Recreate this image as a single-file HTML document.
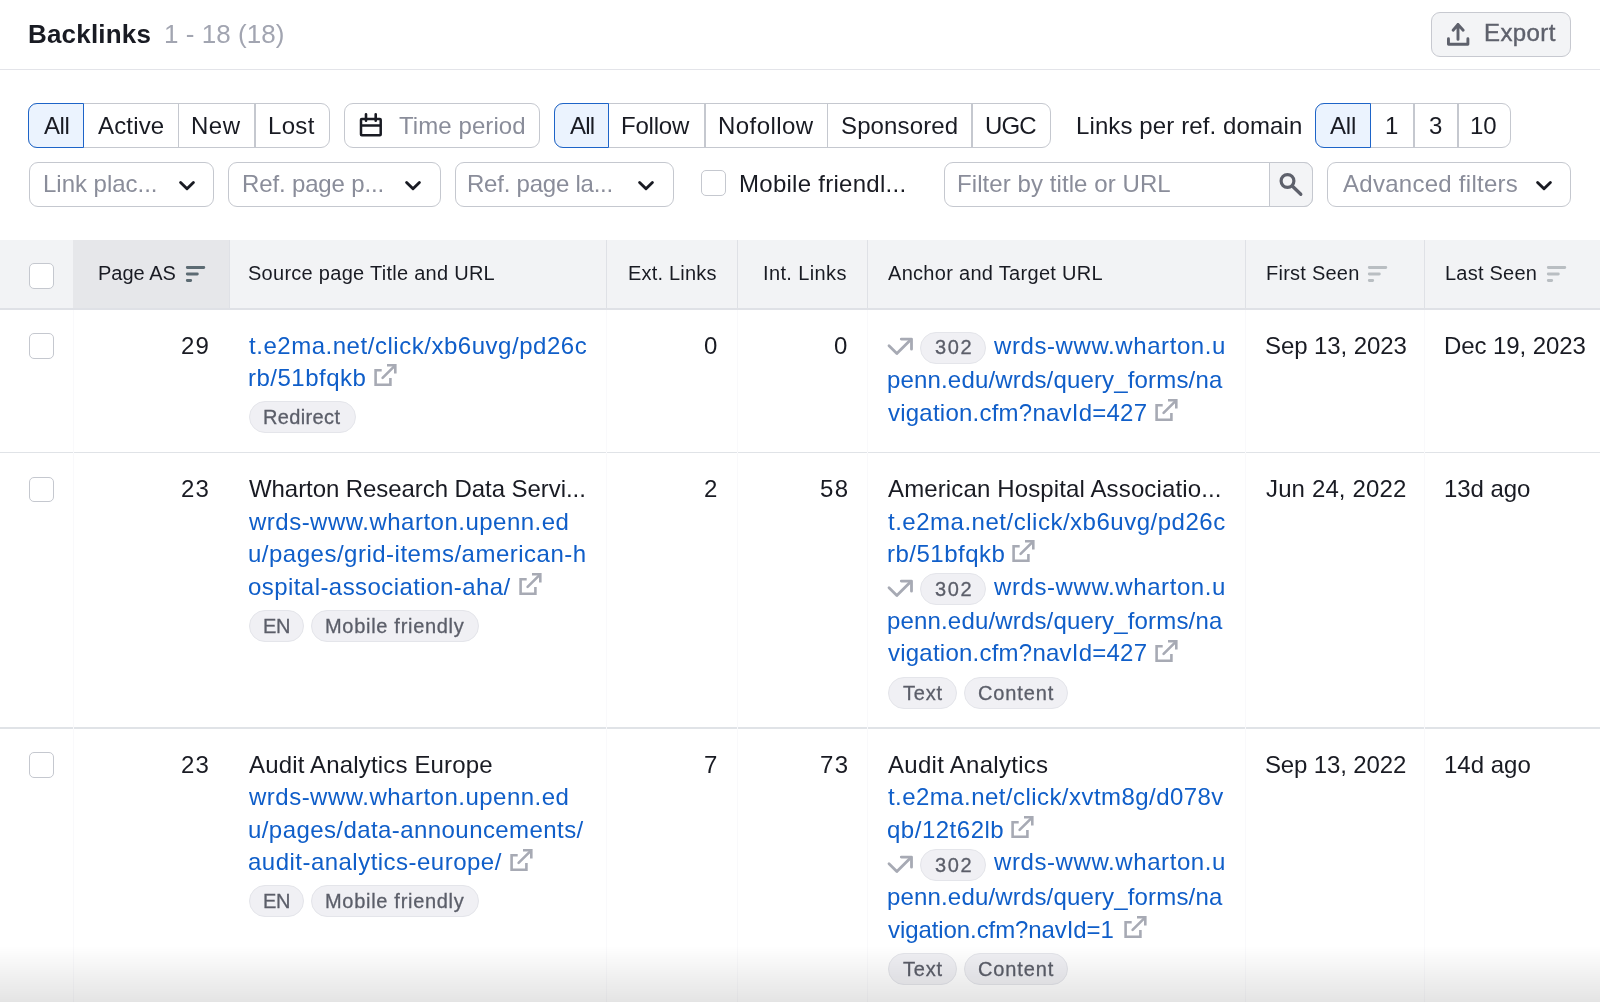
<!DOCTYPE html>
<html><head><meta charset="utf-8"><title>Backlinks</title>
<style>
html,body{margin:0;padding:0;}
body{width:1600px;height:1002px;overflow:hidden;position:relative;background:#fff;font-family:"Liberation Sans",sans-serif;color:#191b23;}
.t{position:absolute;white-space:nowrap;will-change:transform;}
.r{position:absolute;}
</style></head><body>
<div class="t" style="left:28.40px;top:18.00px;font-size:26px;line-height:32px;color:#191b23;font-weight:700;letter-spacing:0.188px;">Backlinks</div>
<div class="t" style="left:163.50px;top:18.00px;font-size:26px;line-height:32px;color:#a2a5b1;letter-spacing:0.050px;">1 - 18 (18)</div>
<div class="r" style="left:1431.00px;top:12.00px;width:140.00px;height:45.00px;border:1.5px solid #c7c9d0;border-radius:9px;background:#f3f4f6;box-sizing:border-box;"></div>
<svg class="r" style="left:1440px;top:16px" width="36" height="36" viewBox="0 0 36 36"><path d="M18 23.4 V8.5 M13.1 14.2 L18 8.5 L23.2 14.2" stroke="#5e616c" stroke-width="2.9" fill="none" stroke-linecap="round" stroke-linejoin="round"/><path d="M8.45 22.8 V28.2 H27.9 V22.8" stroke="#5e616c" stroke-width="2.9" fill="none" stroke-linecap="round" stroke-linejoin="round"/></svg>
<div class="t" style="left:1484.00px;top:18.00px;font-size:24px;line-height:30px;color:#5e616c;letter-spacing:0.400px;-webkit-text-stroke:0.4px #5e616c;">Export</div>
<div class="r" style="left:0.00px;top:68.50px;width:1600.00px;height:1.50px;background:#e3e4e9;"></div>
<div class="r" style="left:28.00px;top:103.00px;width:301.50px;height:45.00px;border:1.5px solid #c5c8cf;border-radius:9px;box-sizing:border-box;background:#fff;"></div>
<div class="r" style="left:28.00px;top:103.00px;width:56.00px;height:45.00px;border:1.75px solid #1d64c8;border-radius:9px 0 0 9px;box-sizing:border-box;background:#ebf3fe;"></div>
<div class="r" style="left:177.65px;top:103.00px;width:1.50px;height:45.00px;background:#c5c8cf;"></div>
<div class="r" style="left:254.25px;top:103.00px;width:1.50px;height:45.00px;background:#c5c8cf;"></div>
<div class="t" style="left:43.70px;top:111.00px;font-size:24px;line-height:30px;color:#191b23;letter-spacing:-0.400px;">All</div>
<div class="t" style="left:97.90px;top:111.00px;font-size:24px;line-height:30px;color:#191b23;letter-spacing:0.160px;">Active</div>
<div class="t" style="left:191.00px;top:111.00px;font-size:24px;line-height:30px;color:#191b23;letter-spacing:0.500px;">New</div>
<div class="t" style="left:268.00px;top:111.00px;font-size:24px;line-height:30px;color:#191b23;letter-spacing:0.333px;">Lost</div>
<div class="r" style="left:344.00px;top:103.00px;width:195.50px;height:45.00px;border:1.5px solid #c5c8cf;border-radius:9px;box-sizing:border-box;"></div>
<svg class="r" style="left:352px;top:106px" width="38" height="38" viewBox="0 0 38 38"><rect x="9" y="13" width="19.7" height="16.3" rx="0.8" fill="none" stroke="#191b23" stroke-width="2.5"/><path d="M9 19.5 H28.7" stroke="#191b23" stroke-width="2.5"/><path d="M14 8.2 V14.8 M23.7 8.2 V14.8" stroke="#191b23" stroke-width="2.6" stroke-linecap="round"/></svg>
<div class="t" style="left:398.75px;top:111.00px;font-size:24px;line-height:30px;color:#8a8d9a;letter-spacing:0.075px;">Time period</div>
<div class="r" style="left:554.00px;top:103.00px;width:496.50px;height:45.00px;border:1.5px solid #c5c8cf;border-radius:9px;box-sizing:border-box;background:#fff;"></div>
<div class="r" style="left:554.00px;top:103.00px;width:54.50px;height:45.00px;border:1.75px solid #1d64c8;border-radius:9px 0 0 9px;box-sizing:border-box;background:#ebf3fe;"></div>
<div class="r" style="left:704.25px;top:103.00px;width:1.50px;height:45.00px;background:#c5c8cf;"></div>
<div class="r" style="left:826.75px;top:103.00px;width:1.50px;height:45.00px;background:#c5c8cf;"></div>
<div class="r" style="left:971.25px;top:103.00px;width:1.50px;height:45.00px;background:#c5c8cf;"></div>
<div class="t" style="left:569.50px;top:111.00px;font-size:24px;line-height:30px;color:#191b23;letter-spacing:-0.750px;">All</div>
<div class="t" style="left:621.00px;top:111.00px;font-size:24px;line-height:30px;color:#191b23;letter-spacing:-0.200px;">Follow</div>
<div class="t" style="left:717.50px;top:111.00px;font-size:24px;line-height:30px;color:#191b23;letter-spacing:0.429px;">Nofollow</div>
<div class="t" style="left:840.75px;top:111.00px;font-size:24px;line-height:30px;color:#191b23;letter-spacing:0.125px;">Sponsored</div>
<div class="t" style="left:984.75px;top:111.00px;font-size:24px;line-height:30px;color:#191b23;letter-spacing:-0.875px;">UGC</div>
<div class="t" style="left:1075.80px;top:111.00px;font-size:24px;line-height:30px;color:#191b23;letter-spacing:0.110px;">Links per ref. domain</div>
<div class="r" style="left:1315.00px;top:103.00px;width:195.50px;height:45.00px;border:1.5px solid #c5c8cf;border-radius:9px;box-sizing:border-box;background:#fff;"></div>
<div class="r" style="left:1315.00px;top:103.00px;width:56.00px;height:45.00px;border:1.75px solid #1d64c8;border-radius:9px 0 0 9px;box-sizing:border-box;background:#ebf3fe;"></div>
<div class="r" style="left:1413.25px;top:103.00px;width:1.50px;height:45.00px;background:#c5c8cf;"></div>
<div class="r" style="left:1457.25px;top:103.00px;width:1.50px;height:45.00px;background:#c5c8cf;"></div>
<div class="t" style="left:1330.00px;top:111.00px;font-size:24px;line-height:30px;color:#191b23;letter-spacing:-0.150px;">All</div>
<div class="t" style="left:1385.00px;top:111.00px;font-size:24px;line-height:30px;color:#191b23;">1</div>
<div class="t" style="left:1428.50px;top:111.00px;font-size:24px;line-height:30px;color:#191b23;">3</div>
<div class="t" style="left:1469.70px;top:111.00px;font-size:24px;line-height:30px;color:#191b23;letter-spacing:-0.100px;">10</div>
<div class="r" style="left:28.50px;top:162.00px;width:185.50px;height:44.50px;border:1.5px solid #c5c8cf;border-radius:9px;box-sizing:border-box;"></div>
<div class="t" style="left:42.60px;top:169.00px;font-size:24px;line-height:30px;color:#8a8d9a;letter-spacing:-0.018px;">Link plac...</div>
<svg class="r" style="left:170.5px;top:172px" width="32" height="26" viewBox="0 0 32 26"><path d="M9.6 10.5 L16 16.8 L22.4 10.5" stroke="#191b23" stroke-width="2.9" fill="none" stroke-linecap="round" stroke-linejoin="round"/></svg>
<div class="r" style="left:228.00px;top:162.00px;width:213.00px;height:44.50px;border:1.5px solid #c5c8cf;border-radius:9px;box-sizing:border-box;"></div>
<div class="t" style="left:241.60px;top:169.00px;font-size:24px;line-height:30px;color:#8a8d9a;letter-spacing:-0.146px;">Ref. page p...</div>
<svg class="r" style="left:397.3px;top:172px" width="32" height="26" viewBox="0 0 32 26"><path d="M9.6 10.5 L16 16.8 L22.4 10.5" stroke="#191b23" stroke-width="2.9" fill="none" stroke-linecap="round" stroke-linejoin="round"/></svg>
<div class="r" style="left:454.50px;top:162.00px;width:219.00px;height:44.50px;border:1.5px solid #c5c8cf;border-radius:9px;box-sizing:border-box;"></div>
<div class="t" style="left:467.20px;top:169.00px;font-size:24px;line-height:30px;color:#8a8d9a;letter-spacing:-0.229px;">Ref. page la...</div>
<svg class="r" style="left:630.3px;top:172px" width="32" height="26" viewBox="0 0 32 26"><path d="M9.6 10.5 L16 16.8 L22.4 10.5" stroke="#191b23" stroke-width="2.9" fill="none" stroke-linecap="round" stroke-linejoin="round"/></svg>
<div class="r" style="left:700.50px;top:170.00px;width:25.50px;height:25.50px;border:1.5px solid #c5c8cf;border-radius:5px;box-sizing:border-box;background:#fff;"></div>
<div class="t" style="left:738.60px;top:169.00px;font-size:24px;line-height:30px;color:#191b23;letter-spacing:0.275px;">Mobile friendl...</div>
<div class="r" style="left:944.00px;top:162.00px;width:369.00px;height:44.50px;border:1.5px solid #c5c8cf;border-radius:9px;box-sizing:border-box;"></div>
<div class="r" style="left:1268.50px;top:162.00px;width:44.50px;height:44.50px;border:1.5px solid #c5c8cf;border-radius:0 9px 9px 0;box-sizing:border-box;background:#f3f4f6;"></div>
<svg class="r" style="left:1272px;top:166px" width="38" height="38" viewBox="0 0 38 38"><circle cx="15.5" cy="15" r="6.4" fill="none" stroke="#5e616c" stroke-width="3.2"/><path d="M20.5 20.3 L28.8 28.3" stroke="#5e616c" stroke-width="3.3" stroke-linecap="round"/></svg>
<div class="t" style="left:956.90px;top:169.00px;font-size:24px;line-height:30px;color:#8a8d9a;letter-spacing:0.076px;">Filter by title or URL</div>
<div class="r" style="left:1327.00px;top:162.00px;width:244.00px;height:44.50px;border:1.5px solid #c5c8cf;border-radius:9px;box-sizing:border-box;"></div>
<div class="t" style="left:1342.50px;top:169.00px;font-size:24px;line-height:30px;color:#8a8d9a;letter-spacing:0.273px;">Advanced filters</div>
<svg class="r" style="left:1527.6px;top:172px" width="32" height="26" viewBox="0 0 32 26"><path d="M9.6 10.5 L16 16.8 L22.4 10.5" stroke="#191b23" stroke-width="2.9" fill="none" stroke-linecap="round" stroke-linejoin="round"/></svg>
<div class="r" style="left:0.00px;top:240.00px;width:1600.00px;height:69.00px;background:#f2f3f5;"></div>
<div class="r" style="left:73.00px;top:240.00px;width:156.00px;height:69.00px;background:#e6e7ea;"></div>
<div class="r" style="left:0.00px;top:308.20px;width:1600.00px;height:1.80px;background:#dfe1e6;"></div>
<div class="r" style="left:228.80px;top:240.00px;width:1.00px;height:68.00px;background:#dfe1e6;"></div>
<div class="r" style="left:606.00px;top:240.00px;width:1.00px;height:68.00px;background:#dfe1e6;"></div>
<div class="r" style="left:736.80px;top:240.00px;width:1.00px;height:68.00px;background:#dfe1e6;"></div>
<div class="r" style="left:867.00px;top:240.00px;width:1.00px;height:68.00px;background:#dfe1e6;"></div>
<div class="r" style="left:1245.00px;top:240.00px;width:1.00px;height:68.00px;background:#dfe1e6;"></div>
<div class="r" style="left:1423.80px;top:240.00px;width:1.00px;height:68.00px;background:#dfe1e6;"></div>
<div class="r" style="left:28.50px;top:263.00px;width:25.50px;height:25.50px;border:1.5px solid #c5c8cf;border-radius:5px;box-sizing:border-box;background:#fff;"></div>
<div class="t" style="left:98.00px;top:261.00px;font-size:20px;line-height:25px;color:#191b23;">Page AS</div>
<div class="t" style="left:248.00px;top:261.00px;font-size:20px;line-height:25px;color:#191b23;letter-spacing:0.275px;">Source page Title and URL</div>
<div class="t" style="left:628.30px;top:261.00px;font-size:20px;line-height:25px;color:#191b23;letter-spacing:0.189px;">Ext. Links</div>
<div class="t" style="left:763.40px;top:261.00px;font-size:20px;line-height:25px;color:#191b23;letter-spacing:0.378px;">Int. Links</div>
<div class="t" style="left:888.00px;top:261.00px;font-size:20px;line-height:25px;color:#191b23;letter-spacing:0.300px;">Anchor and Target URL</div>
<div class="t" style="left:1265.50px;top:261.00px;font-size:20px;line-height:25px;color:#191b23;letter-spacing:0.244px;">First Seen</div>
<div class="t" style="left:1445.20px;top:261.00px;font-size:20px;line-height:25px;color:#191b23;letter-spacing:0.225px;">Last Seen</div>
<svg class="r" style="left:180.0px;top:258px" width="32" height="32" viewBox="0 0 32 32"><path d="M7.3 9.45 H23.8 M7.3 16 H17.3 M7.3 22.55 H10.7" stroke="#5c6b73" stroke-width="2.9" stroke-linecap="round"/></svg>
<svg class="r" style="left:1362.3999999999999px;top:258px" width="32" height="32" viewBox="0 0 32 32"><path d="M7.3 9.45 H23.8 M7.3 16 H17.3 M7.3 22.55 H10.7" stroke="#b9bec2" stroke-width="2.9" stroke-linecap="round"/></svg>
<svg class="r" style="left:1540.5px;top:258px" width="32" height="32" viewBox="0 0 32 32"><path d="M7.3 9.45 H23.8 M7.3 16 H17.3 M7.3 22.55 H10.7" stroke="#b9bec2" stroke-width="2.9" stroke-linecap="round"/></svg>
<div class="r" style="left:0.00px;top:451.75px;width:1600.00px;height:1.50px;background:#e0e3e7;"></div>
<div class="r" style="left:0.00px;top:727.25px;width:1600.00px;height:1.50px;background:#e0e3e7;"></div>
<div class="r" style="left:72.50px;top:310.00px;width:1.00px;height:692.00px;background:#f9f9fb;"></div>
<div class="r" style="left:606.00px;top:310.00px;width:1.00px;height:692.00px;background:#f9f9fb;"></div>
<div class="r" style="left:736.80px;top:310.00px;width:1.00px;height:692.00px;background:#f9f9fb;"></div>
<div class="r" style="left:867.00px;top:310.00px;width:1.00px;height:692.00px;background:#f9f9fb;"></div>
<div class="r" style="left:1245.00px;top:310.00px;width:1.00px;height:692.00px;background:#f9f9fb;"></div>
<div class="r" style="left:1423.80px;top:310.00px;width:1.00px;height:692.00px;background:#f9f9fb;"></div>
<div class="r" style="left:28.50px;top:333.00px;width:25.50px;height:25.50px;border:1.5px solid #c5c8cf;border-radius:5px;box-sizing:border-box;background:#fff;"></div>
<div class="t" style="left:181.00px;top:331.00px;font-size:24px;line-height:30px;color:#191b23;letter-spacing:1.200px;">29</div>
<div class="t" style="left:704.00px;top:331.00px;font-size:24px;line-height:30px;color:#191b23;">0</div>
<div class="t" style="left:833.80px;top:331.00px;font-size:24px;line-height:30px;color:#191b23;">0</div>
<div class="t" style="left:1264.50px;top:331.00px;font-size:24px;line-height:30px;color:#191b23;letter-spacing:-0.091px;">Sep 13, 2023</div>
<div class="t" style="left:1444.00px;top:331.00px;font-size:24px;line-height:30px;color:#191b23;letter-spacing:-0.091px;">Dec 19, 2023</div>
<div class="t" style="left:249.00px;top:331.00px;font-size:24px;line-height:30px;color:#0f5ec9;letter-spacing:0.529px;">t.e2ma.net/click/xb6uvg/pd26c</div>
<div class="t" style="left:248.00px;top:363.00px;font-size:24px;line-height:30px;color:#0f5ec9;letter-spacing:0.500px;">rb/51bfqkb</div>
<svg class="r" style="left:369.70px;top:360.10px" width="30" height="30" viewBox="0 0 30 30"><path d="M11.7 10.2 H5.6 V24.7 H20.4 V18" stroke="#a7aab4" stroke-width="2.6" fill="none"/><path d="M12.6 17.9 L24.2 6.3" stroke="#a7aab4" stroke-width="2.6" fill="none" stroke-linecap="round"/><path d="M17 5.2 H25.3 V13.5" stroke="#a7aab4" stroke-width="2.6" fill="none"/></svg>
<div class="r" style="left:249.00px;top:401.10px;width:107.00px;height:32.20px;background:#f0f0f4;border:1.5px solid #e4e5ea;border-radius:16px;box-sizing:border-box;"></div>
<div class="t" style="left:263.00px;top:405.00px;font-size:20px;line-height:25px;color:#5b5e69;letter-spacing:0.357px;-webkit-text-stroke:0.3px #5b5e69;">Redirect</div>
<svg class="r" style="left:884px;top:332.00px" width="32" height="28" viewBox="0 0 32 28"><path d="M5 13.7 L12.85 21.5 L26.4 7.9" stroke="#a7aab4" stroke-width="2.8" fill="none" stroke-linecap="round" stroke-linejoin="round"/><path d="M17.3 7.1 H27.5 V17.2" stroke="#a7aab4" stroke-width="2.8" fill="none" stroke-linecap="round" stroke-linejoin="round"/></svg>
<div class="r" style="left:920.00px;top:331.60px;width:66.00px;height:32.00px;background:#f0f0f4;border:1.5px solid #e4e5ea;border-radius:16px;box-sizing:border-box;"></div>
<div class="t" style="left:934.70px;top:335.00px;font-size:20px;line-height:25px;color:#5b5e69;letter-spacing:1.650px;-webkit-text-stroke:0.3px #5b5e69;">302</div>
<div class="t" style="left:994.00px;top:331.00px;font-size:24px;line-height:30px;color:#0f5ec9;letter-spacing:0.588px;">wrds-www.wharton.u</div>
<div class="t" style="left:887.40px;top:365.00px;font-size:24px;line-height:30px;color:#0f5ec9;letter-spacing:0.163px;">penn.edu/wrds/query_forms/na</div>
<div class="t" style="left:888.10px;top:398.00px;font-size:24px;line-height:30px;color:#0f5ec9;letter-spacing:0.229px;">vigation.cfm?navId=427</div>
<svg class="r" style="left:1150.70px;top:395.10px" width="30" height="30" viewBox="0 0 30 30"><path d="M11.7 10.2 H5.6 V24.7 H20.4 V18" stroke="#a7aab4" stroke-width="2.6" fill="none"/><path d="M12.6 17.9 L24.2 6.3" stroke="#a7aab4" stroke-width="2.6" fill="none" stroke-linecap="round"/><path d="M17 5.2 H25.3 V13.5" stroke="#a7aab4" stroke-width="2.6" fill="none"/></svg>
<div class="r" style="left:28.50px;top:476.80px;width:25.50px;height:25.50px;border:1.5px solid #c5c8cf;border-radius:5px;box-sizing:border-box;background:#fff;"></div>
<div class="t" style="left:181.00px;top:474.00px;font-size:24px;line-height:30px;color:#191b23;letter-spacing:1.200px;">23</div>
<div class="t" style="left:704.00px;top:474.00px;font-size:24px;line-height:30px;color:#191b23;">2</div>
<div class="t" style="left:819.50px;top:474.00px;font-size:24px;line-height:30px;color:#191b23;letter-spacing:1.300px;">58</div>
<div class="t" style="left:1265.50px;top:474.00px;font-size:24px;line-height:30px;color:#191b23;letter-spacing:0.136px;">Jun 24, 2022</div>
<div class="t" style="left:1444.00px;top:474.00px;font-size:24px;line-height:30px;color:#191b23;letter-spacing:-0.067px;">13d ago</div>
<div class="t" style="left:249.00px;top:474.00px;font-size:24px;line-height:30px;color:#191b23;letter-spacing:-0.069px;">Wharton Research Data Servi...</div>
<div class="t" style="left:249.00px;top:507.00px;font-size:24px;line-height:30px;color:#0f5ec9;letter-spacing:0.492px;">wrds-www.wharton.upenn.ed</div>
<div class="t" style="left:248.00px;top:539.00px;font-size:24px;line-height:30px;color:#0f5ec9;letter-spacing:0.500px;">u/pages/grid-items/american-h</div>
<div class="t" style="left:248.00px;top:572.00px;font-size:24px;line-height:30px;color:#0f5ec9;letter-spacing:0.435px;">ospital-association-aha/</div>
<svg class="r" style="left:514.70px;top:568.60px" width="30" height="30" viewBox="0 0 30 30"><path d="M11.7 10.2 H5.6 V24.7 H20.4 V18" stroke="#a7aab4" stroke-width="2.6" fill="none"/><path d="M12.6 17.9 L24.2 6.3" stroke="#a7aab4" stroke-width="2.6" fill="none" stroke-linecap="round"/><path d="M17 5.2 H25.3 V13.5" stroke="#a7aab4" stroke-width="2.6" fill="none"/></svg>
<div class="r" style="left:249.00px;top:610.10px;width:54.75px;height:32.20px;background:#f0f0f4;border:1.5px solid #e4e5ea;border-radius:16px;box-sizing:border-box;"></div>
<div class="t" style="left:263.20px;top:614.00px;font-size:20px;line-height:25px;color:#5b5e69;letter-spacing:-0.450px;-webkit-text-stroke:0.3px #5b5e69;">EN</div>
<div class="r" style="left:310.60px;top:610.10px;width:168.40px;height:32.20px;background:#f0f0f4;border:1.5px solid #e4e5ea;border-radius:16px;box-sizing:border-box;"></div>
<div class="t" style="left:325.40px;top:614.00px;font-size:20px;line-height:25px;color:#5b5e69;letter-spacing:0.700px;-webkit-text-stroke:0.3px #5b5e69;">Mobile friendly</div>
<div class="t" style="left:888.00px;top:474.00px;font-size:24px;line-height:30px;color:#191b23;letter-spacing:0.133px;">American Hospital Associatio...</div>
<div class="t" style="left:888.40px;top:507.00px;font-size:24px;line-height:30px;color:#0f5ec9;letter-spacing:0.511px;">t.e2ma.net/click/xb6uvg/pd26c</div>
<div class="t" style="left:887.40px;top:539.00px;font-size:24px;line-height:30px;color:#0f5ec9;letter-spacing:0.500px;">rb/51bfqkb</div>
<svg class="r" style="left:1008.20px;top:536.10px" width="30" height="30" viewBox="0 0 30 30"><path d="M11.7 10.2 H5.6 V24.7 H20.4 V18" stroke="#a7aab4" stroke-width="2.6" fill="none"/><path d="M12.6 17.9 L24.2 6.3" stroke="#a7aab4" stroke-width="2.6" fill="none" stroke-linecap="round"/><path d="M17 5.2 H25.3 V13.5" stroke="#a7aab4" stroke-width="2.6" fill="none"/></svg>
<svg class="r" style="left:884px;top:573.60px" width="32" height="28" viewBox="0 0 32 28"><path d="M5 13.7 L12.85 21.5 L26.4 7.9" stroke="#a7aab4" stroke-width="2.8" fill="none" stroke-linecap="round" stroke-linejoin="round"/><path d="M17.3 7.1 H27.5 V17.2" stroke="#a7aab4" stroke-width="2.8" fill="none" stroke-linecap="round" stroke-linejoin="round"/></svg>
<div class="r" style="left:920.00px;top:573.20px;width:66.00px;height:32.00px;background:#f0f0f4;border:1.5px solid #e4e5ea;border-radius:16px;box-sizing:border-box;"></div>
<div class="t" style="left:934.70px;top:577.00px;font-size:20px;line-height:25px;color:#5b5e69;letter-spacing:1.650px;-webkit-text-stroke:0.3px #5b5e69;">302</div>
<div class="t" style="left:994.00px;top:572.00px;font-size:24px;line-height:30px;color:#0f5ec9;letter-spacing:0.588px;">wrds-www.wharton.u</div>
<div class="t" style="left:887.40px;top:606.00px;font-size:24px;line-height:30px;color:#0f5ec9;letter-spacing:0.163px;">penn.edu/wrds/query_forms/na</div>
<div class="t" style="left:888.10px;top:638.00px;font-size:24px;line-height:30px;color:#0f5ec9;letter-spacing:0.229px;">vigation.cfm?navId=427</div>
<svg class="r" style="left:1150.70px;top:635.60px" width="30" height="30" viewBox="0 0 30 30"><path d="M11.7 10.2 H5.6 V24.7 H20.4 V18" stroke="#a7aab4" stroke-width="2.6" fill="none"/><path d="M12.6 17.9 L24.2 6.3" stroke="#a7aab4" stroke-width="2.6" fill="none" stroke-linecap="round"/><path d="M17 5.2 H25.3 V13.5" stroke="#a7aab4" stroke-width="2.6" fill="none"/></svg>
<div class="r" style="left:887.50px;top:676.80px;width:69.50px;height:32.20px;background:#f0f0f4;border:1.5px solid #e4e5ea;border-radius:16px;box-sizing:border-box;"></div>
<div class="t" style="left:902.50px;top:681.00px;font-size:20px;line-height:25px;color:#5b5e69;letter-spacing:0.800px;-webkit-text-stroke:0.3px #5b5e69;">Text</div>
<div class="r" style="left:964.00px;top:676.80px;width:104.00px;height:32.20px;background:#f0f0f4;border:1.5px solid #e4e5ea;border-radius:16px;box-sizing:border-box;"></div>
<div class="t" style="left:977.75px;top:681.00px;font-size:20px;line-height:25px;color:#5b5e69;letter-spacing:0.875px;-webkit-text-stroke:0.3px #5b5e69;">Content</div>
<div class="r" style="left:28.50px;top:752.00px;width:25.50px;height:25.50px;border:1.5px solid #c5c8cf;border-radius:5px;box-sizing:border-box;background:#fff;"></div>
<div class="t" style="left:181.00px;top:750.00px;font-size:24px;line-height:30px;color:#191b23;letter-spacing:1.200px;">23</div>
<div class="t" style="left:704.00px;top:750.00px;font-size:24px;line-height:30px;color:#191b23;">7</div>
<div class="t" style="left:819.50px;top:750.00px;font-size:24px;line-height:30px;color:#191b23;letter-spacing:1.300px;">73</div>
<div class="t" style="left:1264.50px;top:750.00px;font-size:24px;line-height:30px;color:#191b23;letter-spacing:-0.136px;">Sep 13, 2022</div>
<div class="t" style="left:1444.00px;top:750.00px;font-size:24px;line-height:30px;color:#191b23;">14d ago</div>
<div class="t" style="left:249.00px;top:750.00px;font-size:24px;line-height:30px;color:#191b23;letter-spacing:0.167px;">Audit Analytics Europe</div>
<div class="t" style="left:249.00px;top:782.00px;font-size:24px;line-height:30px;color:#0f5ec9;letter-spacing:0.492px;">wrds-www.wharton.upenn.ed</div>
<div class="t" style="left:248.00px;top:815.00px;font-size:24px;line-height:30px;color:#0f5ec9;letter-spacing:0.423px;">u/pages/data-announcements/</div>
<div class="t" style="left:248.00px;top:847.00px;font-size:24px;line-height:30px;color:#0f5ec9;letter-spacing:0.477px;">audit-analytics-europe/</div>
<svg class="r" style="left:506.20px;top:845.10px" width="30" height="30" viewBox="0 0 30 30"><path d="M11.7 10.2 H5.6 V24.7 H20.4 V18" stroke="#a7aab4" stroke-width="2.6" fill="none"/><path d="M12.6 17.9 L24.2 6.3" stroke="#a7aab4" stroke-width="2.6" fill="none" stroke-linecap="round"/><path d="M17 5.2 H25.3 V13.5" stroke="#a7aab4" stroke-width="2.6" fill="none"/></svg>
<div class="r" style="left:249.00px;top:885.30px;width:54.75px;height:32.20px;background:#f0f0f4;border:1.5px solid #e4e5ea;border-radius:16px;box-sizing:border-box;"></div>
<div class="t" style="left:263.20px;top:889.00px;font-size:20px;line-height:25px;color:#5b5e69;letter-spacing:-0.450px;-webkit-text-stroke:0.3px #5b5e69;">EN</div>
<div class="r" style="left:310.60px;top:885.30px;width:168.40px;height:32.20px;background:#f0f0f4;border:1.5px solid #e4e5ea;border-radius:16px;box-sizing:border-box;"></div>
<div class="t" style="left:325.40px;top:889.00px;font-size:20px;line-height:25px;color:#5b5e69;letter-spacing:0.700px;-webkit-text-stroke:0.3px #5b5e69;">Mobile friendly</div>
<div class="t" style="left:888.00px;top:750.00px;font-size:24px;line-height:30px;color:#191b23;letter-spacing:0.286px;">Audit Analytics</div>
<div class="t" style="left:888.40px;top:782.00px;font-size:24px;line-height:30px;color:#0f5ec9;letter-spacing:0.446px;">t.e2ma.net/click/xvtm8g/d078v</div>
<div class="t" style="left:887.40px;top:815.00px;font-size:24px;line-height:30px;color:#0f5ec9;letter-spacing:0.511px;">qb/12t62lb</div>
<svg class="r" style="left:1007.40px;top:812.10px" width="30" height="30" viewBox="0 0 30 30"><path d="M11.7 10.2 H5.6 V24.7 H20.4 V18" stroke="#a7aab4" stroke-width="2.6" fill="none"/><path d="M12.6 17.9 L24.2 6.3" stroke="#a7aab4" stroke-width="2.6" fill="none" stroke-linecap="round"/><path d="M17 5.2 H25.3 V13.5" stroke="#a7aab4" stroke-width="2.6" fill="none"/></svg>
<svg class="r" style="left:884px;top:849.70px" width="32" height="28" viewBox="0 0 32 28"><path d="M5 13.7 L12.85 21.5 L26.4 7.9" stroke="#a7aab4" stroke-width="2.8" fill="none" stroke-linecap="round" stroke-linejoin="round"/><path d="M17.3 7.1 H27.5 V17.2" stroke="#a7aab4" stroke-width="2.8" fill="none" stroke-linecap="round" stroke-linejoin="round"/></svg>
<div class="r" style="left:920.00px;top:849.30px;width:66.00px;height:32.00px;background:#f0f0f4;border:1.5px solid #e4e5ea;border-radius:16px;box-sizing:border-box;"></div>
<div class="t" style="left:934.70px;top:853.00px;font-size:20px;line-height:25px;color:#5b5e69;letter-spacing:1.650px;-webkit-text-stroke:0.3px #5b5e69;">302</div>
<div class="t" style="left:994.00px;top:847.00px;font-size:24px;line-height:30px;color:#0f5ec9;letter-spacing:0.588px;">wrds-www.wharton.u</div>
<div class="t" style="left:887.40px;top:882.00px;font-size:24px;line-height:30px;color:#0f5ec9;letter-spacing:0.163px;">penn.edu/wrds/query_forms/na</div>
<div class="t" style="left:888.10px;top:915.00px;font-size:24px;line-height:30px;color:#0f5ec9;letter-spacing:-0.084px;">vigation.cfm?navId=1</div>
<svg class="r" style="left:1119.70px;top:912.10px" width="30" height="30" viewBox="0 0 30 30"><path d="M11.7 10.2 H5.6 V24.7 H20.4 V18" stroke="#a7aab4" stroke-width="2.6" fill="none"/><path d="M12.6 17.9 L24.2 6.3" stroke="#a7aab4" stroke-width="2.6" fill="none" stroke-linecap="round"/><path d="M17 5.2 H25.3 V13.5" stroke="#a7aab4" stroke-width="2.6" fill="none"/></svg>
<div class="r" style="left:887.50px;top:952.60px;width:69.50px;height:32.20px;background:#f0f0f4;border:1.5px solid #e4e5ea;border-radius:16px;box-sizing:border-box;"></div>
<div class="t" style="left:902.50px;top:957.00px;font-size:20px;line-height:25px;color:#5b5e69;letter-spacing:0.800px;-webkit-text-stroke:0.3px #5b5e69;">Text</div>
<div class="r" style="left:964.00px;top:952.60px;width:104.00px;height:32.20px;background:#f0f0f4;border:1.5px solid #e4e5ea;border-radius:16px;box-sizing:border-box;"></div>
<div class="t" style="left:977.75px;top:957.00px;font-size:20px;line-height:25px;color:#5b5e69;letter-spacing:0.875px;-webkit-text-stroke:0.3px #5b5e69;">Content</div>
<div class="r" style="left:0.00px;top:946.00px;width:1600.00px;height:56.00px;background:linear-gradient(to bottom, rgba(0,0,0,0) 0%, rgba(0,0,0,0.105) 100%);"></div>
</body></html>
